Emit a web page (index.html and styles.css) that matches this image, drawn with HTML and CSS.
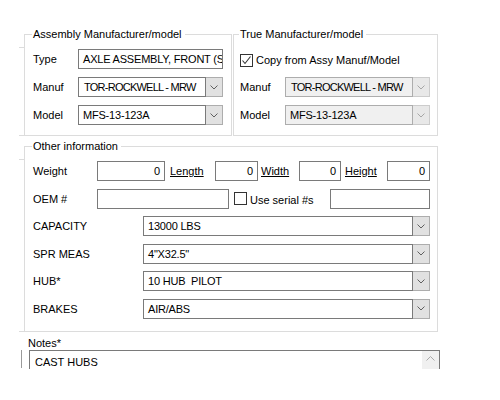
FILE: index.html
```html
<!DOCTYPE html>
<html>
<head>
<meta charset="utf-8">
<link rel="stylesheet" href="styles.css">
</head>
<body>
<div class="page">
  <div class="top">
    <fieldset class="grp asm stub">
      <legend>Assembly Manufacturer/model</legend>
      <div class="row">
        <span class="lbl">Type</span>
        <div class="field w145">AXLE ASSEMBLY, FRONT (STEER)</div>
      </div>
      <div class="row">
        <span class="lbl">Manuf</span>
        <div class="combo w145">
          <div class="field tight">TOR-ROCKWELL - MRW</div>
          <div class="btn"><svg width="8" height="5" viewBox="0 0 8 5"><path d="M0.5 0.5 L4 4 L7.5 0.5" fill="none" stroke="#606060"/></svg></div>
        </div>
      </div>
      <div class="row">
        <span class="lbl">Model</span>
        <div class="combo w145">
          <div class="field">MFS-13-123A</div>
          <div class="btn"><svg width="8" height="5" viewBox="0 0 8 5"><path d="M0.5 0.5 L4 4 L7.5 0.5" fill="none" stroke="#606060"/></svg></div>
        </div>
      </div>
    </fieldset>
    <fieldset class="grp tru">
      <legend>True Manufacturer/model</legend>
      <div class="row">
        <span class="chk"><svg width="11" height="11" viewBox="0 0 11 11"><path d="M1.5 5.5 L4 8.5 L9.5 1.5" fill="none" stroke="#333" stroke-width="1.1"/></svg></span>
        <span class="chktext">Copy from Assy Manuf/Model</span>
      </div>
      <div class="row">
        <span class="lbl">Manuf</span>
        <div class="combo w145 dis">
          <div class="field tight">TOR-ROCKWELL - MRW</div>
          <div class="btn"><svg width="8" height="5" viewBox="0 0 8 5"><path d="M0.5 0.5 L4 4 L7.5 0.5" fill="none" stroke="#a6a6a6"/></svg></div>
        </div>
      </div>
      <div class="row">
        <span class="lbl">Model</span>
        <div class="combo w145 dis">
          <div class="field">MFS-13-123A</div>
          <div class="btn"><svg width="8" height="5" viewBox="0 0 8 5"><path d="M0.5 0.5 L4 4 L7.5 0.5" fill="none" stroke="#a6a6a6"/></svg></div>
        </div>
      </div>
    </fieldset>
  </div>

  <fieldset class="grp other stub">
    <legend>Other information</legend>
    <div class="row">
      <span class="lbl lw">Weight</span>
      <div class="field num w68">0</div>
      <span class="link l1">Length</span>
      <div class="field num w43">0</div>
      <span class="link l2">Width</span>
      <div class="field num w42">0</div>
      <span class="link l3">Height</span>
      <div class="field num w43">0</div>
    </div>
    <div class="row">
      <span class="lbl lw">OEM #</span>
      <div class="field w132"></div>
      <span class="chk chk-oem"></span>
      <span class="chktext">Use serial #s</span>
      <div class="field w100 push"></div>
    </div>
    <div class="row">
      <span class="lbl lc">CAPACITY</span>
      <div class="combo wide">
        <div class="field">13000 LBS</div>
        <div class="btn"><svg width="8" height="5" viewBox="0 0 8 5"><path d="M0.5 0.5 L4 4 L7.5 0.5" fill="none" stroke="#606060"/></svg></div>
      </div>
    </div>
    <div class="row">
      <span class="lbl lc">SPR MEAS</span>
      <div class="combo wide">
        <div class="field">4"X32.5"</div>
        <div class="btn"><svg width="8" height="5" viewBox="0 0 8 5"><path d="M0.5 0.5 L4 4 L7.5 0.5" fill="none" stroke="#606060"/></svg></div>
      </div>
    </div>
    <div class="row">
      <span class="lbl lc">HUB*</span>
      <div class="combo wide">
        <div class="field">10 HUB&nbsp; PILOT</div>
        <div class="btn"><svg width="8" height="5" viewBox="0 0 8 5"><path d="M0.5 0.5 L4 4 L7.5 0.5" fill="none" stroke="#606060"/></svg></div>
      </div>
    </div>
    <div class="row">
      <span class="lbl lc">BRAKES</span>
      <div class="combo wide">
        <div class="field">AIR/ABS</div>
        <div class="btn"><svg width="8" height="5" viewBox="0 0 8 5"><path d="M0.5 0.5 L4 4 L7.5 0.5" fill="none" stroke="#606060"/></svg></div>
      </div>
    </div>
  </fieldset>

  <div class="notes">
    <div class="notes-lbl">Notes*</div>
    <div class="notes-wrap">
      <div class="notes-box">
        <span class="notes-text">CAST HUBS</span>
        <span class="scroll"><svg width="9" height="5" viewBox="0 0 9 5"><path d="M0.5 4.5 L4.5 0.5 L8.5 4.5" fill="none" stroke="#a8a8a8"/></svg></span>
      </div>
    </div>
  </div>
</div>
</body>
</html>
```

FILE: styles.css
```css
* { box-sizing: border-box; }
html, body { margin: 0; background: #fff; }
body {
  width: 500px;
  height: 400px;
  overflow: hidden;
  font-family: "Liberation Sans", Arial, sans-serif;
  font-size: 11px;
  line-height: 14px;
  color: #000;
}
.page { padding: 27px 0 0 24px; }
.top { display: flex; gap: 1px; }

.grp {
  margin: 0;
  min-width: 0;
  border: 1px solid #dcdcdc;
  padding: 8px 7px 10px 8px;
}
.grp legend {
  padding: 0 3px 0 1px;
  margin-left: -1px;
  line-height: 14px;
}
.stub { position: relative; }
.stub::before,
.stub::after {
  content: "";
  position: absolute;
  left: -6px;
  width: 5px;
  height: 1px;
  background: #dcdcdc;
}
.stub::before { top: 6px; }
.stub::after { bottom: -1px; }

.asm { width: 208px; }
.tru { width: 205px; padding-left: 6px; }
.other { width: 414px; margin-top: 3px; padding-bottom: 12px; }

.row { display: flex; align-items: center; height: 20px; }
.row + .row { margin-top: 8px; }
.other .row + .row { margin-top: 7.5px; }

.lbl { width: 45px; flex: none; }
.lw { width: 64px; }
.lc { width: 110px; }

.field {
  height: 20px;
  border: 1px solid #7a7a7a;
  background: #fff;
  padding: 0 4px;
  display: flex;
  align-items: center;
  white-space: nowrap;
  overflow: hidden;
  flex: none;
  letter-spacing: -0.2px;
}
.field.tight { letter-spacing: -0.75px; padding-left: 5px; }
.num { justify-content: flex-end; padding-right: 4px; }
.w145 { width: 145px; }
.w68 { width: 68px; }
.w43 { width: 43px; }
.w42 { width: 42px; }
.w132 { width: 132px; }
.w100 { width: 100px; }
.push { margin-left: auto; }

.combo { display: flex; height: 20px; flex: none; }
.combo .field { flex: 1; min-width: 0; }
.combo.wide { width: 287px; }
.btn {
  width: 17px;
  flex: none;
  border: 1px solid #adadad;
  border-left: none;
  background: #e1e1e1;
  display: flex;
  align-items: center;
  justify-content: center;
}
.dis .field { background: #f0f0f0; border-color: #adadad; }
.dis .btn { background: #e8e8e8; border-color: #cccccc; }

.link { text-decoration: underline; flex: none; }
.l1 { margin-left: 5px; width: 45px; }
.l2 { margin-left: 3px; width: 38px; }
.l3 { margin-left: 4px; width: 42px; }

.chk {
  width: 13px;
  height: 13px;
  border: 1px solid #333;
  background: #fff;
  display: flex;
  align-items: center;
  justify-content: center;
  flex: none;
  margin-top: 3px;
}
.chktext { margin-left: 3px; padding-top: 2px; }
.chk-oem { margin-left: 5px; margin-top: 0; }

.notes { padding-top: 4px; }
.notes-lbl { margin-left: 4px; height: 14px; }
.notes-wrap {
  margin-left: -3px;
  border-left: 1px solid #9a9a9a;
  height: 18px;
  padding-left: 7px;
}
.notes-box {
  width: 411px;
  height: 19px;
  border: 1px solid #7a7a7a;
  border-bottom: none;
  display: flex;
  align-items: center;
  padding-left: 5px;
}
.notes-text { flex: 1; padding-top: 4px; }
.scroll {
  width: 17px;
  height: 18px;
  background: #f0f0f0;
  display: flex;
  align-items: center;
  justify-content: center;
  padding-bottom: 2px;
}
```
